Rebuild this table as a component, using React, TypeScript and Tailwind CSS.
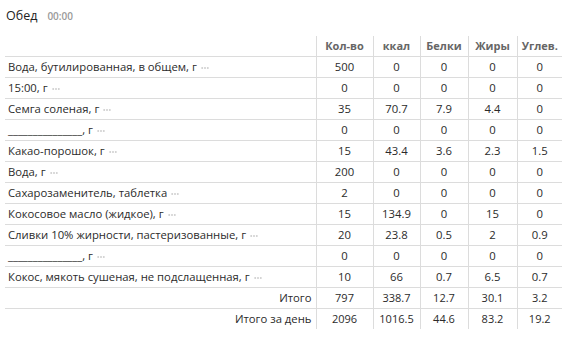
import React from 'react';

type Row = {
  name: string;
  qty: string;
  kcal: string;
  prot: string;
  fat: string;
  carb: string;
};

const rows: Row[] = [
  { name: 'Вода, бутилированная, в общем, г', qty: '500', kcal: '0', prot: '0', fat: '0', carb: '0' },
  { name: '15:00, г', qty: '0', kcal: '0', prot: '0', fat: '0', carb: '0' },
  { name: 'Семга соленая, г', qty: '35', kcal: '70.7', prot: '7.9', fat: '4.4', carb: '0' },
  { name: '_______________, г', qty: '0', kcal: '0', prot: '0', fat: '0', carb: '0' },
  { name: 'Какао-порошок, г', qty: '15', kcal: '43.4', prot: '3.6', fat: '2.3', carb: '1.5' },
  { name: 'Вода, г', qty: '200', kcal: '0', prot: '0', fat: '0', carb: '0' },
  { name: 'Сахарозаменитель, таблетка', qty: '2', kcal: '0', prot: '0', fat: '0', carb: '0' },
  { name: 'Кокосовое масло (жидкое), г', qty: '15', kcal: '134.9', prot: '0', fat: '15', carb: '0' },
  { name: 'Сливки 10% жирности, пастеризованные, г', qty: '20', kcal: '23.8', prot: '0.5', fat: '2', carb: '0.9' },
  { name: '_______________, г', qty: '0', kcal: '0', prot: '0', fat: '0', carb: '0' },
  { name: 'Кокос, мякоть сушеная, не подслащенная, г', qty: '10', kcal: '66', prot: '0.7', fat: '6.5', carb: '0.7' },
];

const totals = [
  { label: 'Итого', values: ['797', '338.7', '12.7', '30.1', '3.2'] },
  { label: 'Итого за день', values: ['2096', '1016.5', '44.6', '83.2', '19.2'] },
];

// tiny "more" dots after each product name
const Dots = () => (
  <svg width="8" height="4" viewBox="0 0 8 4" className="inline-block ml-[4px] align-middle">
    <circle cx="1.2" cy="2" r="1" fill="#cfcfcf" />
    <circle cx="4" cy="2" r="1" fill="#cfcfcf" />
    <circle cx="6.8" cy="2" r="1" fill="#cfcfcf" />
  </svg>
);

const numCell = 'h-[21px] p-0 text-center border-l border-[#dcdcdc] border-t';

export default function App() {
  return (
    <div className="w-[568px] h-[337px] bg-white font-['Open_Sans',sans-serif] text-[#2b2b2b]">
      {/* title */}
      <div className="flex items-baseline pl-[6px] pt-[7px] h-[36px]">
        <span className="text-[12.5px] text-[#222]">Обед</span>
        <span className="ml-[10px] text-[10px] font-semibold text-[#9a9a9a]">00:00</span>
      </div>

      <table className="ml-[5px] w-[557px] border-collapse table-fixed text-[11.3px] leading-none">
        <colgroup>
          <col className="w-[311px]" />
          <col className="w-[57px]" />
          <col className="w-[47px]" />
          <col className="w-[48px]" />
          <col className="w-[49px]" />
          <col className="w-[45px]" />
        </colgroup>
        <thead>
          <tr className="h-[20px] text-[#666] text-[11px] font-semibold">
            <th className="p-0"></th>
            <th className="p-0 text-center border-l border-[#dcdcdc]">Кол-во</th>
            <th className="p-0 text-center border-l border-[#dcdcdc]">ккал</th>
            <th className="p-0 text-center border-l border-[#dcdcdc]">Белки</th>
            <th className="p-0 text-center border-l border-[#dcdcdc]">Жиры</th>
            <th className="p-0 text-center border-l border-[#dcdcdc]">Углев.</th>
          </tr>
        </thead>
        <tbody>
          {rows.map((r, i) => (
            <tr key={i} className="h-[21px]">
              <td className="h-[21px] p-0 pl-[3px] border-t border-[#dcdcdc] whitespace-nowrap">
                {r.name}
                <Dots />
              </td>
              <td className={numCell}>{r.qty}</td>
              <td className={numCell}>{r.kcal}</td>
              <td className={numCell}>{r.prot}</td>
              <td className={numCell}>{r.fat}</td>
              <td className={numCell}>{r.carb}</td>
            </tr>
          ))}
          {totals.map((t) => (
            <tr key={t.label} className="h-[21px]">
              <td className="h-[21px] p-0 pr-[4px] text-right border-t border-[#dcdcdc]">{t.label}</td>
              {t.values.map((v, j) => (
                <td key={j} className={numCell + ' text-[11px]'}>
                  {v}
                </td>
              ))}
            </tr>
          ))}
        </tbody>
      </table>
    </div>
  );
}
